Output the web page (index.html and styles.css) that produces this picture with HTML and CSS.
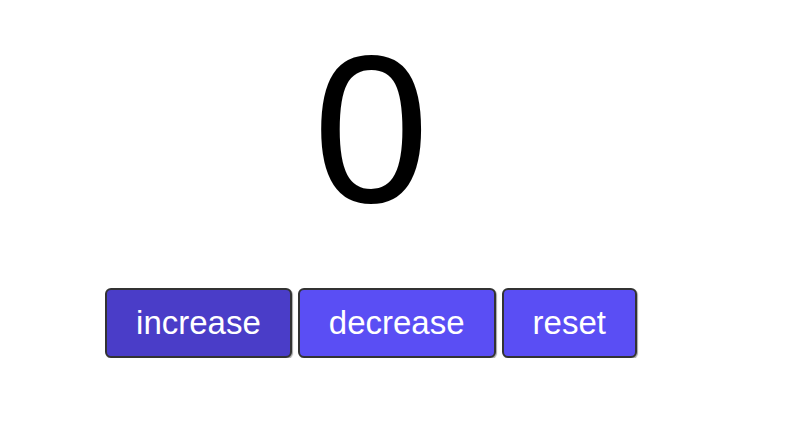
FILE: index.html
```html
<!DOCTYPE html>
<html>
<head>
<meta charset="utf-8">
<link rel="stylesheet" href="styles.css">
</head>
<body>
<main class="app">
  <div class="count">0</div>
  <div class="controls">
    <button class="btn btn-hover">increase</button>
    <button class="btn">decrease</button>
    <button class="btn">reset</button>
  </div>
</main>
</body>
</html>
```
FILE: styles.css
```css
html, body {
  margin: 0;
  padding: 0;
  background: #ffffff;
}
.app {
  display: flex;
  flex-direction: column;
  align-items: center;
  padding-top: 25px;
  padding-right: 58px;
  font-family: "Liberation Sans", Arial, sans-serif;
}
.count {
  font-size: 209px;
  line-height: 1;
  color: #000;
}
.controls {
  display: flex;
  gap: 6px;
  margin-top: 54px;
}
.btn {
  font-family: "Liberation Sans", Arial, sans-serif;
  font-size: 33px;
  line-height: 38px;
  color: #ffffff;
  background: #5a4ef4;
  border: 2px solid #333333;
  border-radius: 6px;
  padding: 14px 29px;
  box-shadow: 1px 1px 1px rgba(0,0,0,0.35);
}
.btn-hover {
  background: #4a3dc8;
}
```
